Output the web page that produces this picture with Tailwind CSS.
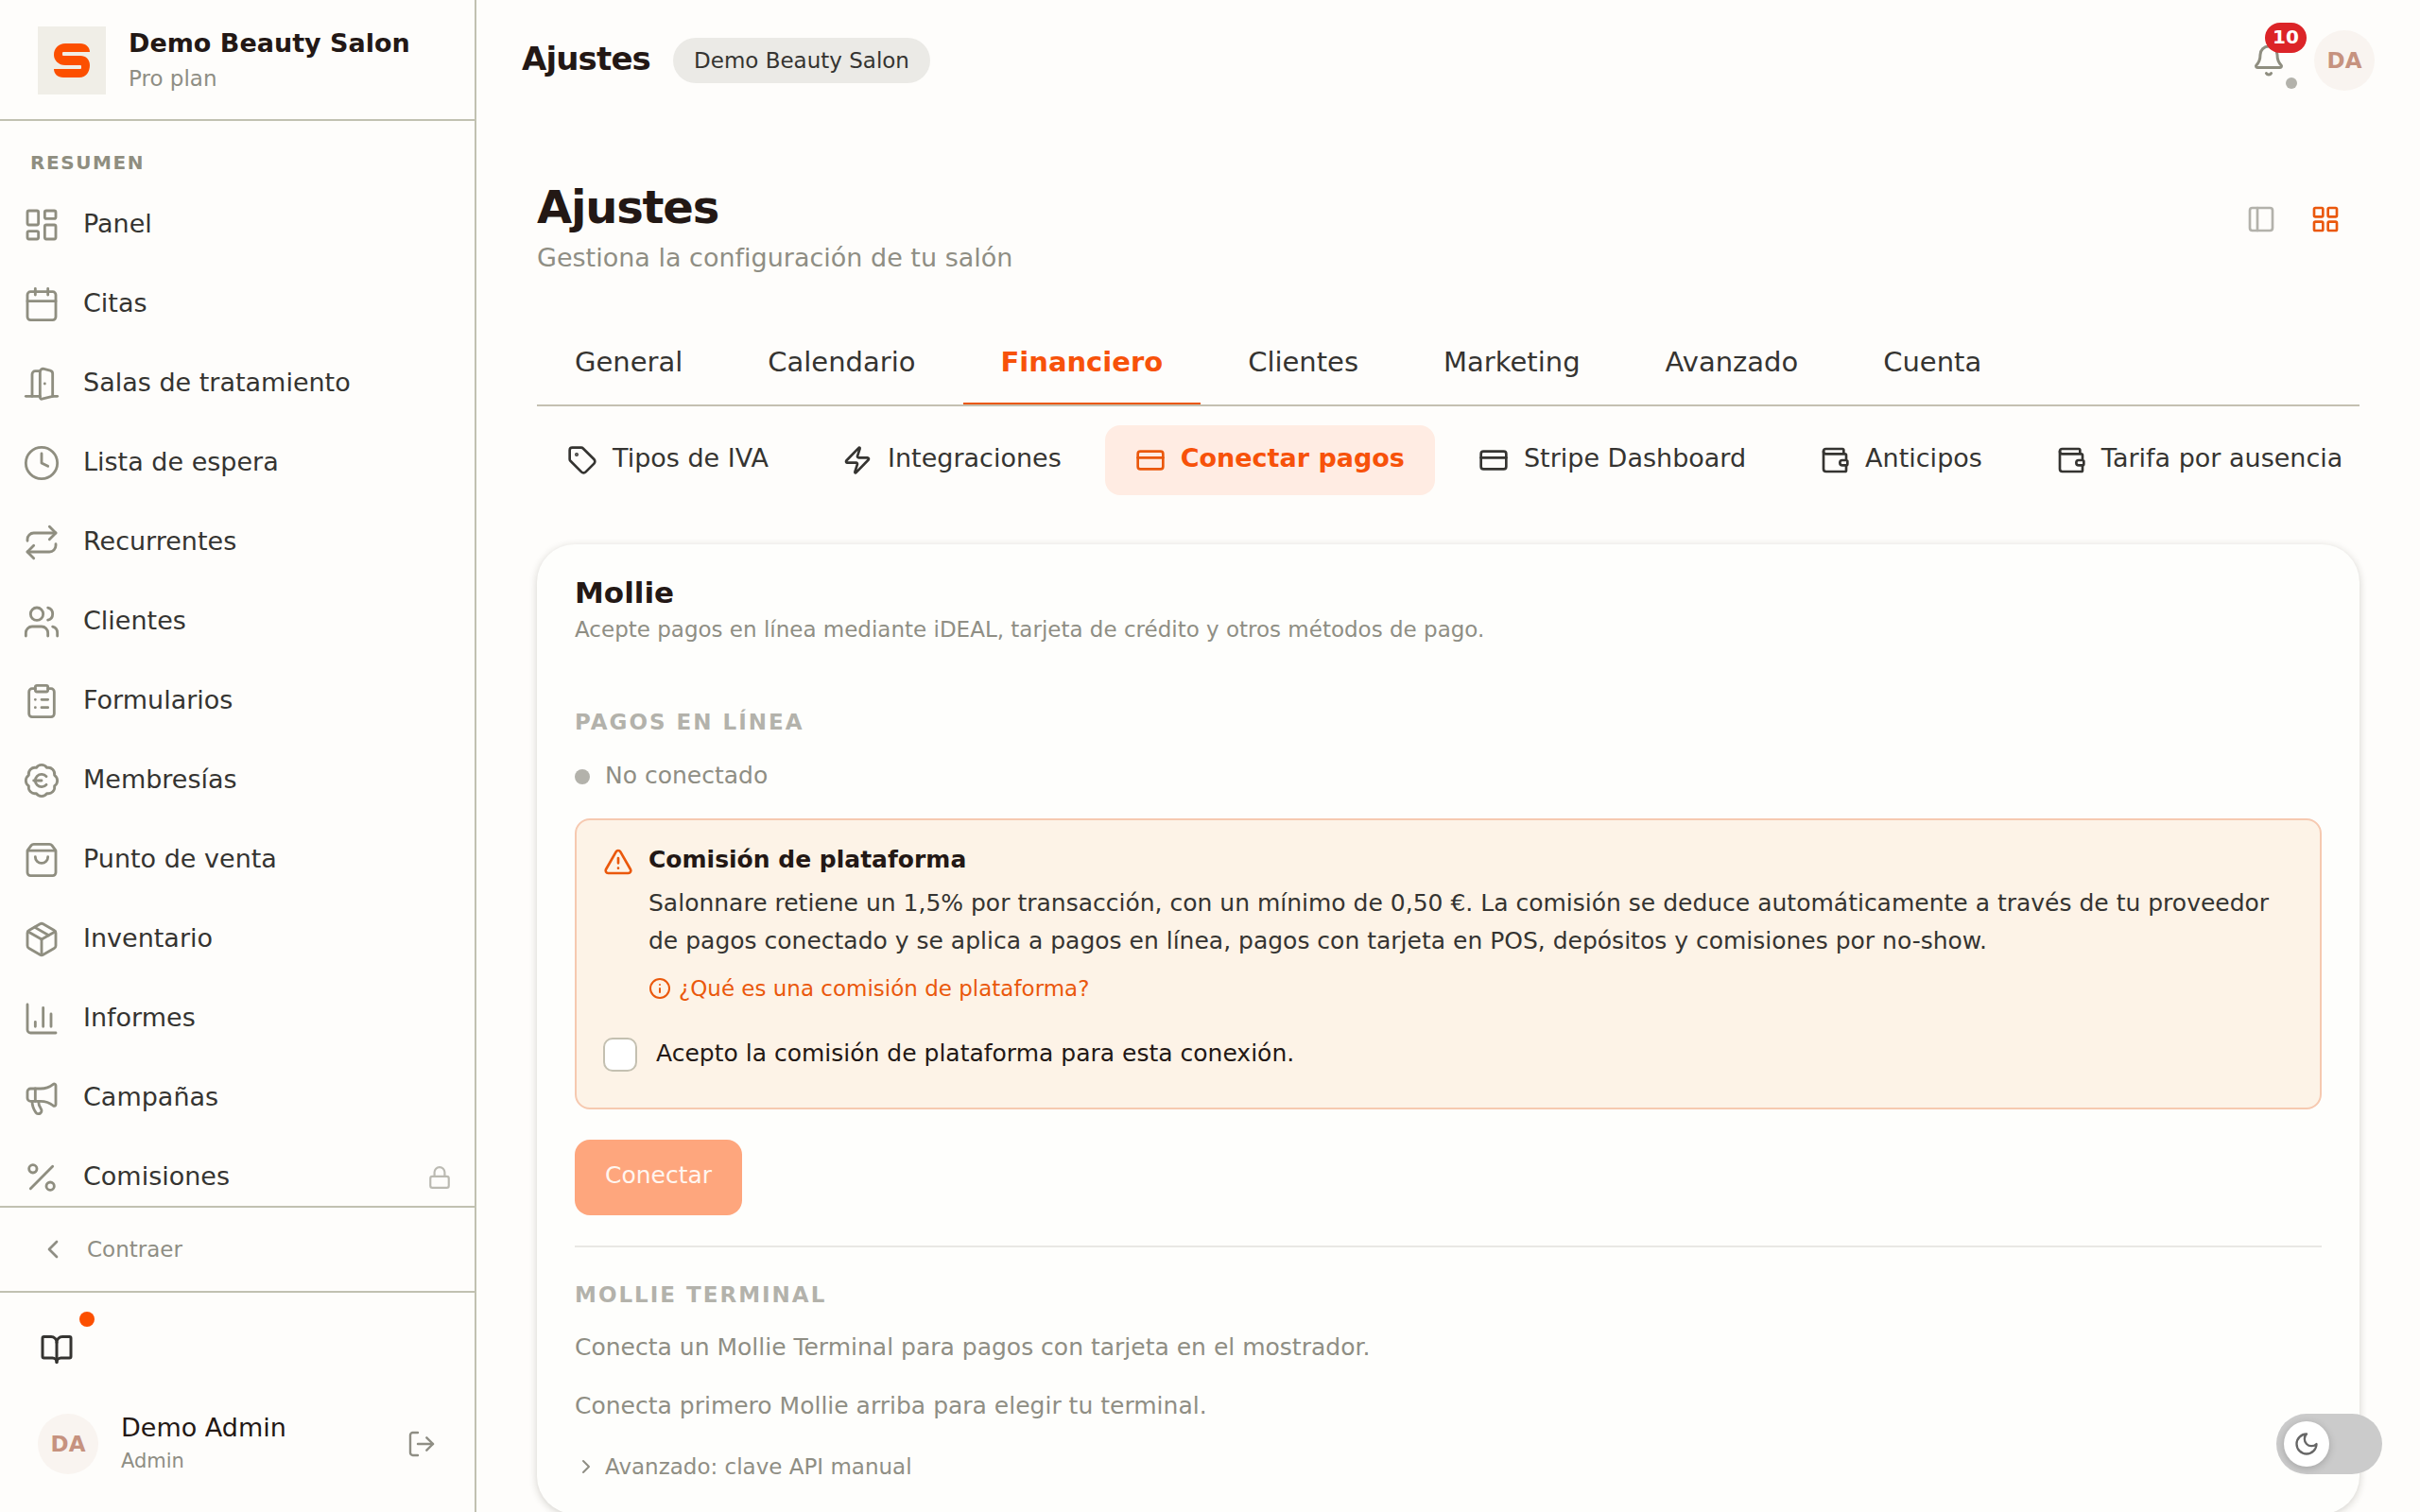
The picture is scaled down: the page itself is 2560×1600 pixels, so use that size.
<!DOCTYPE html>
<html lang="es">
<head>
<meta charset="utf-8">
<meta name="viewport" content="width=device-width, initial-scale=1">
<title>Ajustes · Demo Beauty Salon</title>
<script src="https://cdn.jsdelivr.net/npm/@tailwindcss/browser@4"></script>
</head>
<body class="flex h-screen overflow-hidden bg-[#fefdfb] font-['DejaVu_Sans',sans-serif] text-[#353431]">

<svg class="hidden" aria-hidden="true">
  <symbol id="dashboard" viewBox="0 0 24 24"><rect x="3" y="3" width="7" height="9" rx="1"/><rect x="14" y="3" width="7" height="5" rx="1"/><rect x="14" y="12" width="7" height="9" rx="1"/><rect x="3" y="16" width="7" height="5" rx="1"/></symbol>
  <symbol id="calendar" viewBox="0 0 24 24"><path d="M8 2v4M16 2v4M3 10h18"/><rect x="3" y="4" width="18" height="18" rx="2"/></symbol>
  <symbol id="door" viewBox="0 0 24 24"><path d="M11 20H2"/><path d="M11 4.562v16.157a1 1 0 0 0 1.242.97L19 20V5.562a2 2 0 0 0-1.515-1.94l-4-1A2 2 0 0 0 11 4.561z"/><path d="M11 4H8a2 2 0 0 0-2 2v14"/><path d="M14 12h.01"/><path d="M22 20h-3"/></symbol>
  <symbol id="clock" viewBox="0 0 24 24"><circle cx="12" cy="12" r="10"/><path d="M12 6v6l4 2"/></symbol>
  <symbol id="repeat" viewBox="0 0 24 24"><path d="m17 2 4 4-4 4"/><path d="M3 11v-1a4 4 0 0 1 4-4h14"/><path d="m7 22-4-4 4-4"/><path d="M21 13v1a4 4 0 0 1-4 4H3"/></symbol>
  <symbol id="users" viewBox="0 0 24 24"><path d="M16 21v-2a4 4 0 0 0-4-4H6a4 4 0 0 0-4 4v2"/><circle cx="9" cy="7" r="4"/><path d="M22 21v-2a4 4 0 0 0-3-3.87"/><path d="M16 3.13a4 4 0 0 1 0 7.75"/></symbol>
  <symbol id="clipboard" viewBox="0 0 24 24"><rect x="8" y="2" width="8" height="4" rx="1"/><path d="M16 4h2a2 2 0 0 1 2 2v14a2 2 0 0 1-2 2H6a2 2 0 0 1-2-2V6a2 2 0 0 1 2-2h2"/><path d="M12 11h4M12 16h4M8 11h.01M8 16h.01"/></symbol>
  <symbol id="euro" viewBox="0 0 24 24"><path d="M3.85 8.62a4 4 0 0 1 4.78-4.77 4 4 0 0 1 6.74 0 4 4 0 0 1 4.78 4.78 4 4 0 0 1 0 6.74 4 4 0 0 1-4.77 4.78 4 4 0 0 1-6.75 0 4 4 0 0 1-4.78-4.77 4 4 0 0 1 0-6.76Z"/><path d="M7 12h5"/><path d="M15 9.4a4 4 0 1 0 0 5.2"/></symbol>
  <symbol id="bag" viewBox="0 0 24 24"><path d="M16 10a4 4 0 0 1-8 0"/><path d="M3.103 6.034h17.794"/><path d="M3.4 5.467a2 2 0 0 0-.4 1.2V20a2 2 0 0 0 2 2h14a2 2 0 0 0 2-2V6.667a2 2 0 0 0-.4-1.2l-2-2.667A2 2 0 0 0 17 2H7a2 2 0 0 0-1.6.8z"/></symbol>
  <symbol id="package" viewBox="0 0 24 24"><path d="M11 21.73a2 2 0 0 0 2 0l7-4A2 2 0 0 0 21 16V8a2 2 0 0 0-1-1.73l-7-4a2 2 0 0 0-2 0l-7 4A2 2 0 0 0 3 8v8a2 2 0 0 0 1 1.73z"/><path d="M12 22V12"/><path d="m3.29 7 8.71 5 8.71-5"/><path d="m7.5 4.27 9 5.15"/></symbol>
  <symbol id="chart" viewBox="0 0 24 24"><path d="M3 3v16a2 2 0 0 0 2 2h16"/><path d="M18 17V9M13 17V5M8 17v-3"/></symbol>
  <symbol id="megaphone" viewBox="0 0 24 24"><path d="M11 6a13 13 0 0 0 8.4-2.8A1 1 0 0 1 21 4v12a1 1 0 0 1-1.6.8A13 13 0 0 0 11 14H5a2 2 0 0 1-2-2V8a2 2 0 0 1 2-2z"/><path d="M6 14a12 12 0 0 0 2.4 7.2 2 2 0 0 0 3.2-2.4A8 8 0 0 1 10 14"/><path d="M8 6v8"/></symbol>
  <symbol id="percent" viewBox="0 0 24 24"><path d="M19 5 5 19"/><circle cx="6.5" cy="6.5" r="2.5"/><circle cx="17.5" cy="17.5" r="2.5"/></symbol>
  <symbol id="lock" viewBox="0 0 24 24"><rect x="3" y="11" width="18" height="11" rx="2"/><path d="M7 11V7a5 5 0 0 1 10 0v4"/></symbol>
  <symbol id="left" viewBox="0 0 24 24"><path d="m15 18-6-6 6-6"/></symbol>
  <symbol id="right" viewBox="0 0 24 24"><path d="m9 18 6-6-6-6"/></symbol>
  <symbol id="book" viewBox="0 0 24 24"><path d="M12 7v14"/><path d="M3 18a1 1 0 0 1-1-1V4a1 1 0 0 1 1-1h5a4 4 0 0 1 4 4 4 4 0 0 1 4-4h5a1 1 0 0 1 1 1v13a1 1 0 0 1-1 1h-6a3 3 0 0 0-3 3 3 3 0 0 0-3-3z"/></symbol>
  <symbol id="logout" viewBox="0 0 24 24"><path d="m16 17 5-5-5-5"/><path d="M21 12H9"/><path d="M9 21H5a2 2 0 0 1-2-2V5a2 2 0 0 1 2-2h4"/></symbol>
  <symbol id="bell" viewBox="0 0 24 24"><path d="M10.268 21a2 2 0 0 0 3.464 0"/><path d="M3.262 15.326A1 1 0 0 0 4 17h16a1 1 0 0 0 .74-1.673C19.41 13.956 18 12.499 18 8A6 6 0 0 0 6 8c0 4.499-1.411 5.956-2.738 7.326"/></symbol>
  <symbol id="panel" viewBox="0 0 24 24"><rect x="3" y="3" width="18" height="18" rx="2"/><path d="M9 3v18"/></symbol>
  <symbol id="grid" viewBox="0 0 24 24"><rect x="3" y="3" width="7" height="7" rx="1"/><rect x="14" y="3" width="7" height="7" rx="1"/><rect x="14" y="14" width="7" height="7" rx="1"/><rect x="3" y="14" width="7" height="7" rx="1"/></symbol>
  <symbol id="tag" viewBox="0 0 24 24"><path d="M12.586 2.586A2 2 0 0 0 11.172 2H4a2 2 0 0 0-2 2v7.172a2 2 0 0 0 .586 1.414l8.704 8.704a2.426 2.426 0 0 0 3.42 0l6.58-6.58a2.426 2.426 0 0 0 0-3.42z"/><circle cx="7.5" cy="7.5" r=".5" fill="currentColor"/></symbol>
  <symbol id="zap" viewBox="0 0 24 24"><path d="M4 14a1 1 0 0 1-.78-1.63l9.9-10.2a.5.5 0 0 1 .86.46l-1.92 6.02A1 1 0 0 0 13 10h7a1 1 0 0 1 .78 1.63l-9.9 10.2a.5.5 0 0 1-.86-.46l1.92-6.02A1 1 0 0 0 11 14z"/></symbol>
  <symbol id="card" viewBox="0 0 24 24"><rect x="2" y="5" width="20" height="14" rx="2"/><path d="M2 10h20"/></symbol>
  <symbol id="wallet" viewBox="0 0 24 24"><path d="M19 7V4a1 1 0 0 0-1-1H5a2 2 0 0 0 0 4h15a1 1 0 0 1 1 1v4h-3a2 2 0 0 0 0 4h3a1 1 0 0 0 1-1v-2a1 1 0 0 0-1-1"/><path d="M3 5v14a2 2 0 0 0 2 2h15a1 1 0 0 0 1-1v-4"/></symbol>
  <symbol id="alert" viewBox="0 0 24 24"><path d="m21.73 18-8-14a2 2 0 0 0-3.48 0l-8 14A2 2 0 0 0 4 21h16a2 2 0 0 0 1.73-3"/><path d="M12 9v4M12 17h.01"/></symbol>
  <symbol id="info" viewBox="0 0 24 24"><circle cx="12" cy="12" r="10"/><path d="M12 16v-4M12 8h.01"/></symbol>
  <symbol id="moon" viewBox="0 0 24 24"><path d="M12 3a6 6 0 0 0 9 9 9 9 0 1 1-9-9Z"/></symbol>
</svg>

<aside class="flex w-[504px] shrink-0 flex-col border-r-2 border-[#c1c1b1]">
  <div class="flex h-32 shrink-0 items-center gap-6 border-b-2 border-[#c1c1b1] px-10 pt-[2px]">
    <div class="flex size-[72px] items-center justify-center bg-[#f0eee7]">
      <svg class="h-9 w-[38px] fill-[#fc4f00]" viewBox="0 0 38 36" role="img" aria-label="Logotipo"><path d="M12 0H28C34 0 38 4 38 9H10Q9 9 9 10V12Q9 13 10 13H28C34 13 38 17 38 23C38 30 34 36 27 36H10C4 36 0 32 0 27H28Q29 27 29 26V24Q29 23 28 23H12C5 23 0 18 0 12C0 5 5 0 12 0Z"/></svg>
    </div>
    <div>
      <p class="text-[27px] leading-[38px] font-bold text-[#231815]">Demo Beauty Salon</p>
      <p class="text-[23px] leading-9 text-[#8f8e84]">Pro plan</p>
    </div>
  </div>

  <nav class="min-h-0 flex-1 overflow-hidden pt-[30px]" aria-label="Principal">
    <h2 class="mb-3 px-8 text-[20px] leading-7 font-bold tracking-[0.08em] text-[#8f8e80]">RESUMEN</h2>
    <ul class="flex flex-col gap-1 text-[27px] leading-9">
      <li><a href="#" class="flex h-20 items-center gap-6 px-6"><svg class="size-10 fill-none stroke-[#8f8e80] stroke-[1.7] [stroke-linecap:round] [stroke-linejoin:round]"><use href="#dashboard"/></svg><span class="pb-[3px]">Panel</span></a></li>
      <li><a href="#" class="flex h-20 items-center gap-6 px-6"><svg class="size-10 fill-none stroke-[#8f8e80] stroke-[1.7] [stroke-linecap:round] [stroke-linejoin:round]"><use href="#calendar"/></svg><span class="pb-[3px]">Citas</span></a></li>
      <li><a href="#" class="flex h-20 items-center gap-6 px-6"><svg class="size-10 fill-none stroke-[#8f8e80] stroke-[1.7] [stroke-linecap:round] [stroke-linejoin:round]"><use href="#door"/></svg><span class="pb-[3px]">Salas de tratamiento</span></a></li>
      <li><a href="#" class="flex h-20 items-center gap-6 px-6"><svg class="size-10 fill-none stroke-[#8f8e80] stroke-[1.7] [stroke-linecap:round] [stroke-linejoin:round]"><use href="#clock"/></svg><span class="pb-[3px]">Lista de espera</span></a></li>
      <li><a href="#" class="flex h-20 items-center gap-6 px-6"><svg class="size-10 fill-none stroke-[#8f8e80] stroke-[1.7] [stroke-linecap:round] [stroke-linejoin:round]"><use href="#repeat"/></svg><span class="pb-[3px]">Recurrentes</span></a></li>
      <li><a href="#" class="flex h-20 items-center gap-6 px-6"><svg class="size-10 fill-none stroke-[#8f8e80] stroke-[1.7] [stroke-linecap:round] [stroke-linejoin:round]"><use href="#users"/></svg><span class="pb-[3px]">Clientes</span></a></li>
      <li><a href="#" class="flex h-20 items-center gap-6 px-6"><svg class="size-10 fill-none stroke-[#8f8e80] stroke-[1.7] [stroke-linecap:round] [stroke-linejoin:round]"><use href="#clipboard"/></svg><span class="pb-[3px]">Formularios</span></a></li>
      <li><a href="#" class="flex h-20 items-center gap-6 px-6"><svg class="size-10 fill-none stroke-[#8f8e80] stroke-[1.7] [stroke-linecap:round] [stroke-linejoin:round]"><use href="#euro"/></svg><span class="pb-[3px]">Membresías</span></a></li>
      <li><a href="#" class="flex h-20 items-center gap-6 px-6"><svg class="size-10 fill-none stroke-[#8f8e80] stroke-[1.7] [stroke-linecap:round] [stroke-linejoin:round]"><use href="#bag"/></svg><span class="pb-[3px]">Punto de venta</span></a></li>
      <li><a href="#" class="flex h-20 items-center gap-6 px-6"><svg class="size-10 fill-none stroke-[#8f8e80] stroke-[1.7] [stroke-linecap:round] [stroke-linejoin:round]"><use href="#package"/></svg><span class="pb-[3px]">Inventario</span></a></li>
      <li><a href="#" class="flex h-20 items-center gap-6 px-6"><svg class="size-10 fill-none stroke-[#8f8e80] stroke-[1.7] [stroke-linecap:round] [stroke-linejoin:round]"><use href="#chart"/></svg><span class="pb-[3px]">Informes</span></a></li>
      <li><a href="#" class="flex h-20 items-center gap-6 px-6"><svg class="size-10 fill-none stroke-[#8f8e80] stroke-[1.7] [stroke-linecap:round] [stroke-linejoin:round]"><use href="#megaphone"/></svg><span class="pb-[3px]">Campañas</span></a></li>
      <li><a href="#" class="flex h-20 items-center gap-6 px-6"><svg class="size-10 fill-none stroke-[#8f8e80] stroke-[1.7] [stroke-linecap:round] [stroke-linejoin:round]"><use href="#percent"/></svg><span class="pb-[3px]">Comisiones</span><svg class="ml-auto size-[26px] fill-none stroke-[#bbbab2] stroke-2 [stroke-linecap:round] [stroke-linejoin:round]"><use href="#lock"/></svg></a></li>
    </ul>
  </nav>

  <button type="button" class="flex h-[92px] shrink-0 items-center gap-5 border-y-2 border-[#c1c1b1] px-10 text-[23px] leading-9 text-[#8f8e84]">
    <svg class="size-8 fill-none stroke-current stroke-2 [stroke-linecap:round] [stroke-linejoin:round]"><use href="#left"/></svg>Contraer
  </button>

  <div class="shrink-0 pt-6 pb-10">
    <button type="button" aria-label="Guía" class="relative ml-6 flex size-[72px] items-center justify-center">
      <svg class="size-9 fill-none stroke-[#353431] stroke-2 [stroke-linecap:round] [stroke-linejoin:round]"><use href="#book"/></svg>
      <span class="absolute -top-1 -right-1 size-4 rounded-full bg-[#fc4f00]"></span>
    </button>
    <div class="mt-8 flex h-16 items-center gap-6 px-10">
      <span class="flex size-16 items-center justify-center rounded-full bg-[#f9f4f0] text-[23px] font-bold text-[#c6927f]">DA</span>
      <div>
        <p class="text-[27px] leading-9 text-[#231815]">Demo Admin</p>
        <p class="text-[21px] leading-[34px] text-[#8f8e84]">Admin</p>
      </div>
      <button type="button" aria-label="Cerrar sesión" class="ml-auto"><svg class="size-8 fill-none stroke-[#8f8e84] stroke-[1.8] [stroke-linecap:round] [stroke-linejoin:round]"><use href="#logout"/></svg></button>
    </div>
  </div>
</aside>

<div class="flex min-w-0 flex-1 flex-col">
  <header class="flex h-32 shrink-0 items-center gap-6 px-12">
    <p class="pb-[5px] text-[34px] leading-10 font-bold tracking-tight text-[#231815]">Ajustes</p>
    <span class="rounded-full bg-[#ebeae6] px-[22px] text-[23px] leading-[48px]">Demo Beauty Salon</span>
    <div class="ml-auto flex items-center gap-4">
      <button type="button" aria-label="Notificaciones" class="relative flex size-16 items-center justify-center">
        <svg class="size-9 fill-none stroke-[#8f8e80] stroke-2 [stroke-linecap:round] [stroke-linejoin:round]"><use href="#bell"/></svg>
        <span class="absolute -top-2 -right-2 h-8 w-11 rounded-full bg-[#dc2428] text-center text-[20px] leading-[30px] font-bold text-white">10</span>
        <span class="absolute right-[2px] bottom-[2px] size-3 rounded-full bg-[#b3b2ab]"></span>
      </button>
      <button type="button" class="flex size-16 items-center justify-center rounded-full bg-[#f9f4f0] text-[23px] font-bold text-[#c6927f]">DA</button>
    </div>
  </header>

  <main class="min-h-0 flex-1 overflow-hidden px-16 pt-16">
    <div class="flex items-start justify-between">
      <div>
        <h1 class="text-[48px] leading-[54px] font-bold tracking-tight text-[#231815]">Ajustes</h1>
        <p class="text-[27px] leading-[54px] text-[#8f8e84]">Gestiona la configuración de tu salón</p>
      </div>
      <div class="flex gap-1 px-1 py-2">
        <button type="button" aria-label="Vista lateral" class="flex size-16 items-center justify-center"><svg class="size-8 fill-none stroke-[#b3b2ab] stroke-2 [stroke-linecap:round] [stroke-linejoin:round]"><use href="#panel"/></svg></button>
        <button type="button" aria-label="Vista de pestañas" class="flex size-16 items-center justify-center"><svg class="size-8 fill-none stroke-[#ea580c] stroke-2 [stroke-linecap:round] [stroke-linejoin:round]"><use href="#grid"/></svg></button>
      </div>
    </div>

    <nav class="mt-10 flex gap-[10px] border-b-2 border-[#c4c0b1] text-[29px] leading-[86px]" aria-label="Secciones">
      <a href="#" class="border-b-2 border-transparent px-10">General</a>
      <a href="#" class="border-b-2 border-transparent px-10">Calendario</a>
      <a href="#" class="border-b-2 border-[#ea580c] px-10 font-bold text-[#f7520a]" aria-current="page">Financiero</a>
      <a href="#" class="border-b-2 border-transparent px-10">Clientes</a>
      <a href="#" class="border-b-2 border-transparent px-10">Marketing</a>
      <a href="#" class="border-b-2 border-transparent px-10">Avanzado</a>
      <a href="#" class="border-b-2 border-transparent px-10">Cuenta</a>
    </nav>

    <nav class="mt-5 flex gap-[14px] text-[27px] leading-[37px] whitespace-nowrap" aria-label="Financiero">
      <a href="#" class="flex items-center gap-4 px-8 py-4"><svg class="size-8 shrink-0 fill-none stroke-current stroke-2 [stroke-linecap:round] [stroke-linejoin:round]"><use href="#tag"/></svg><span class="pb-[5px]">Tipos de IVA</span></a>
      <a href="#" class="flex items-center gap-4 px-8 py-4"><svg class="size-8 shrink-0 fill-none stroke-current stroke-2 [stroke-linecap:round] [stroke-linejoin:round]"><use href="#zap"/></svg><span class="pb-[5px]">Integraciones</span></a>
      <a href="#" class="flex items-center gap-4 rounded-2xl bg-[#ffece3] px-8 py-4 font-bold text-[#f7520a]" aria-current="page"><svg class="size-8 shrink-0 fill-none stroke-[#ea580c] stroke-2 [stroke-linecap:round] [stroke-linejoin:round]"><use href="#card"/></svg><span class="pb-[5px]">Conectar pagos</span></a>
      <a href="#" class="flex items-center gap-4 px-8 py-4"><svg class="size-8 shrink-0 fill-none stroke-current stroke-2 [stroke-linecap:round] [stroke-linejoin:round]"><use href="#card"/></svg><span class="pb-[5px]">Stripe Dashboard</span></a>
      <a href="#" class="flex items-center gap-4 px-8 py-4"><svg class="size-8 shrink-0 fill-none stroke-current stroke-2 [stroke-linecap:round] [stroke-linejoin:round]"><use href="#wallet"/></svg><span class="pb-[5px]">Anticipos</span></a>
      <a href="#" class="flex items-center gap-4 px-8 py-4"><svg class="size-8 shrink-0 fill-none stroke-current stroke-2 [stroke-linecap:round] [stroke-linejoin:round]"><use href="#wallet"/></svg><span class="pb-[5px]">Tarifa por ausencia</span></a>
    </nav>

    <section class="mt-[52px] rounded-[40px] bg-[#fefefc] px-10 py-8 text-[25px] leading-10 shadow-[0_2px_8px_rgba(40,35,20,0.2)]">
      <h2 class="mb-[2px] text-[31px] leading-[38px] font-bold text-[#231815]">Mollie</h2>
      <p class="text-[23px] leading-9 text-[#8f8e84]">Acepte pagos en línea mediante iDEAL, tarjeta de crédito y otros métodos de pago.</p>

      <h3 class="mt-[62px] text-[23px] leading-9 font-bold tracking-[2px] text-[#b3b2ab]">PAGOS EN LÍNEA</h3>
      <p class="mt-5 flex h-10 items-center gap-4 text-[#8f8e84]"><span class="size-4 rounded-full bg-[#b3b2ab]"></span><span class="pb-[3px]">No conectado</span></p>

      <div class="mt-6 rounded-2xl border-2 border-[#f6c9b0] bg-[#fdf3e7] p-7">
        <div class="flex gap-4">
          <svg class="size-8 shrink-0 fill-none stroke-[#ea580c] stroke-2 [stroke-linecap:round] [stroke-linejoin:round]"><use href="#alert"/></svg>
          <div>
            <h4 class="leading-7 font-bold text-[#231815]">Comisión de plataforma</h4>
            <p class="mt-3">Salonnare retiene un 1,5% por transacción, con un mínimo de 0,50 €. La comisión se deduce automáticamente a través de tu proveedor de pagos conectado y se aplica a pagos en línea, pagos con tarjeta en POS, depósitos y comisiones por no-show.</p>
            <a href="#" class="mt-3 flex items-center gap-2 text-[23px] leading-9 text-[#ea580c]"><svg class="size-6 fill-none stroke-current stroke-2 [stroke-linecap:round] [stroke-linejoin:round]"><use href="#info"/></svg>¿Qué es una comisión de plataforma?</a>
          </div>
        </div>
        <label class="mt-6 flex items-center gap-5 py-[10px] leading-8 text-[#231815]">
          <input type="checkbox" class="size-9 shrink-0 appearance-none rounded-[10px] border-2 border-[#c4c0b1] bg-white">
          <span class="pb-[3px]">Acepto la comisión de plataforma para esta conexión.</span>
        </label>
      </div>

      <button type="button" disabled class="mt-8 block rounded-2xl bg-[#fea67d] px-8 pt-[18px] pb-[22px] text-[#fff6f0]">Conectar</button>

      <h3 class="mt-8 border-t-2 border-[#e9e8e4] pt-8 text-[23px] leading-9 font-bold tracking-[2px] text-[#b3b2ab]">MOLLIE TERMINAL</h3>
      <p class="mt-[18px] text-[#8f8e84]">Conecta un Mollie Terminal para pagos con tarjeta en el mostrador.</p>
      <p class="mt-[22px] text-[#8f8e84]">Conecta primero Mollie arriba para elegir tu terminal.</p>
      <details class="mt-[26px] text-[23px] leading-9 text-[#8f8e84]">
        <summary class="flex items-center gap-2"><svg class="size-6 fill-none stroke-current stroke-2 [stroke-linecap:round] [stroke-linejoin:round]"><use href="#right"/></svg>Avanzado: clave API manual</summary>
      </details>
    </section>
  </main>
</div>

<button type="button" role="switch" aria-checked="false" aria-label="Modo oscuro" class="fixed right-10 bottom-10 flex h-16 w-28 items-center rounded-full bg-[#cbcbcb] px-2">
  <span class="flex size-12 items-center justify-center rounded-full bg-white shadow-[0_2px_8px_rgba(0,0,0,0.2)]"><svg class="size-7 fill-none stroke-[#666666] stroke-2 [stroke-linecap:round] [stroke-linejoin:round]"><use href="#moon"/></svg></span>
</button>

</body>
</html>
